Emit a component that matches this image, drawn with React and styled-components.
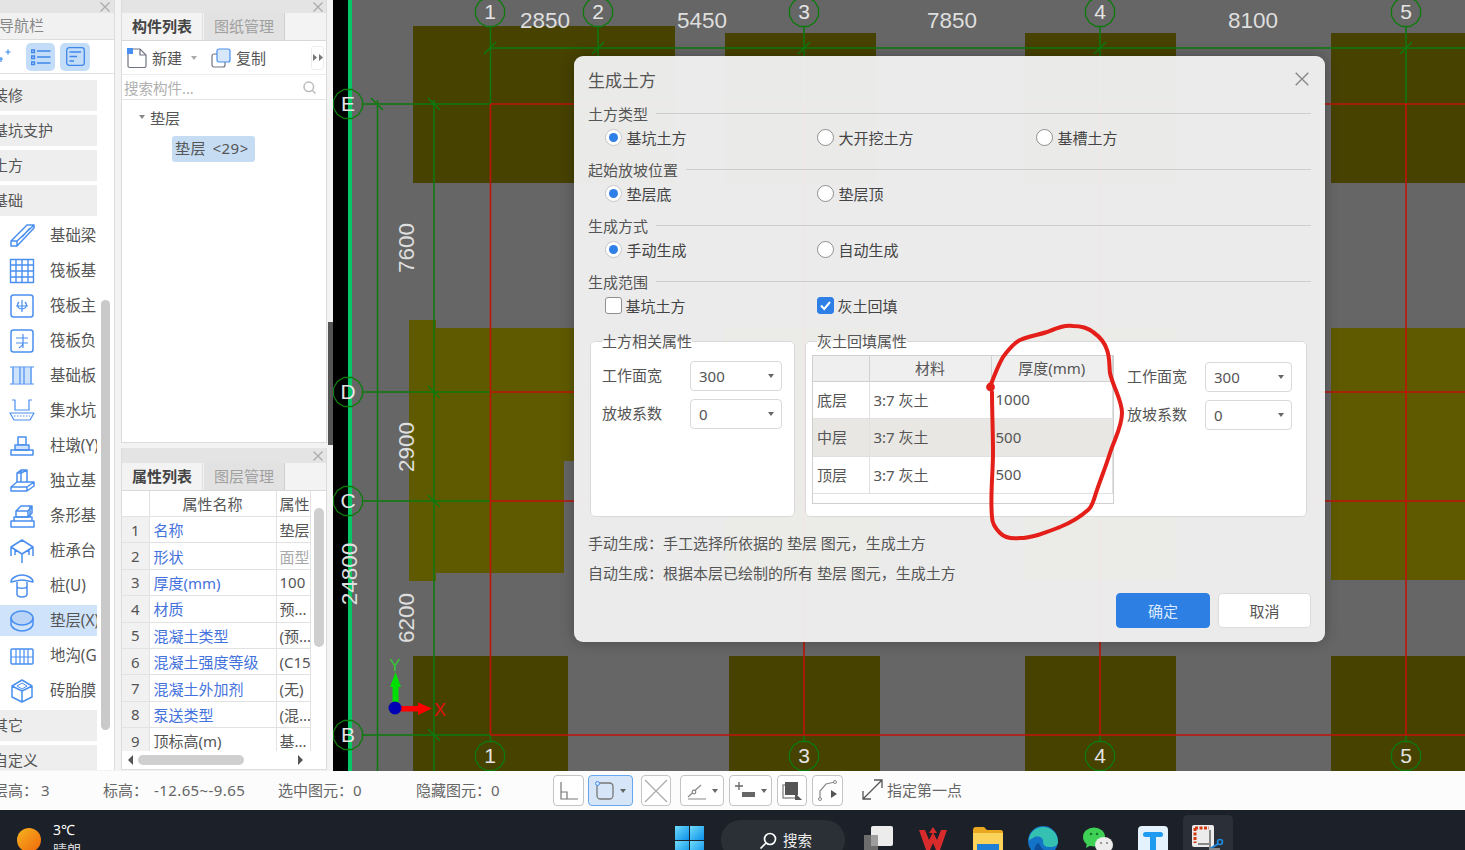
import React from "react";
import styled, { createGlobalStyle } from "styled-components";

const GlobalStyle = createGlobalStyle`
  html, body { margin: 0; padding: 0; overflow: hidden; background: #f3f3f3; }
  body { font-family: "Noto Sans", "Noto Sans CJK SC", sans-serif; color: #555; }
  * { box-sizing: border-box; }
`;

const Page = styled.div`
  width: 1465px;
  height: 850px;
  display: flex;
  flex-direction: column;
  overflow: hidden;
`;

const Main = styled.div`
  height: 771px;
  display: flex;
`;

/* left nav */
const NavPanel = styled.div`
  position: relative;
  width: 115px;
  height: 770px;
  background: #fff;
  border-right: 1px solid #dcdcdc;
  overflow: hidden;
  flex: none;
`;

const TitleStrip = styled.div`
  height: ${(p) => p.$h || 13}px;
  background: #e4e4e4;
  display: flex;
  align-items: center;
  justify-content: flex-end;
  padding-right: ${(p) => p.$pad || 4}px;
  color: #aaa;
`;

const NavHeader = styled.div`
  height: 27px;
  background: #f1f1f1;
  border-bottom: 1px solid #ddd;
  font-size: 15px;
  line-height: 25px;
  color: #888;
  text-indent: -1px;
`;

const NavTools = styled.div`
  height: 34px;
  border-bottom: 1px solid #e2e2e2;
  display: flex;
  align-items: center;
  gap: 5px;
`;

const NavPlusWrap = styled.span`
  display: flex;
  margin-right: 10px;
`;

const NavToolBtn = styled.div`
  width: ${(p) => p.$w}px;
  height: 28px;
  border-radius: 5px;
  background: #c3dcf7;
  display: flex;
  align-items: center;
  justify-content: center;
`;

const NavList = styled.div`
  padding-top: 6px;
  width: 97px;
`;

const NavGroup = styled.div`
  height: 31px;
  margin-bottom: 4px;
  background: #eeeeee;
  font-size: 15px;
  line-height: 30px;
  text-indent: -7px;
  white-space: nowrap;
  overflow: hidden;
`;

const NavItem = styled.div`
  height: 31px;
  margin-bottom: 4px;
  display: flex;
  align-items: center;
  background: ${(p) => (p.$on ? "#cfe4fb" : "transparent")};
  font-size: 15.4px;
  white-space: nowrap;
  overflow: hidden;
  padding-left: 9px;
  svg { flex: none; margin-right: 15px; }
`;

const NavLabel = styled.span`
  margin-top: -2px;
`;

const NavScroll = styled.div`
  position: absolute;
  left: 101px;
  top: 300px;
  width: 9px;
  height: 430px;
  border-radius: 5px;
  background: #c9c9c9;
`;

const Gutter = styled.div`
  width: 6px;
  flex: none;
`;

/* middle column */
const MidColumn = styled.div`
  width: 206px;
  height: 770px;
  flex: none;
  display: flex;
  flex-direction: column;
  gap: 5px;
`;

const Panel = styled.div`
  position: relative;
  background: #fff;
  border: 1px solid #dcdcdc;
  border-top: none;
  height: ${(p) => p.$h}px;
  overflow: hidden;
`;

const Tabs = styled.div`
  height: 28px;
  display: flex;
  background: #f3f3f3;
  border-bottom: 1px solid #d8d8d8;
`;

const Tab = styled.div`
  width: 81px;
  margin-right: 1px;
  font-size: 15px;
  line-height: 26px;
  text-align: center;
  font-weight: ${(p) => (p.$on ? 700 : 400)};
  color: ${(p) => (p.$on ? "#444" : "#a0a0a0")};
  background: ${(p) => (p.$on ? "#f3f3f3" : "#e2e2e2")};
  border-right: ${(p) => (p.$on ? "1px solid #e0e0e0" : "1px solid #cfcfcf")};
`;

const ListTools = styled.div`
  height: 34px;
  display: flex;
  align-items: center;
  padding-left: 5px;
  font-size: 15px;
  border-bottom: 1px solid #ececec;
`;

const ToolLabel = styled.span`
  margin-left: 5px;
  margin-right: ${(p) => p.$mr || 0}px;
`;

const CopyIcon = styled.svg`
  margin-left: 14px;
`;

const MiniCaret = styled.span`
  width: 0;
  height: 0;
  border: 3px solid transparent;
  border-top: 4px solid ${(p) => p.$c || "#999"};
  border-bottom: none;
  flex: none;
`;

const MoreBtn = styled.span`
  margin-left: auto;
  margin-right: 2px;
  width: 13px;
  height: 24px;
  border: 1px solid #eee;
  border-radius: 3px;
  display: flex;
  align-items: center;
  justify-content: center;
`;

const SearchRow = styled.div`
  height: 25px;
  display: flex;
  align-items: center;
  justify-content: space-between;
  padding: 0 10px 0 2px;
  font-size: 14.5px;
  color: #b0b0b0;
  border-bottom: 1px solid #e4e4e4;
`;

const Tree = styled.div`
  padding: 7px 0 0 17px;
  font-size: 15px;
`;

const TreeRoot = styled.div`
  display: flex;
  align-items: center;
  gap: 5px;
  height: 20px;
`;

const TreeChip = styled.div`
  display: inline-block;
  margin: 9px 0 0 33px;
  width: 83px;
  height: 26px;
  line-height: 25px;
  padding-left: 3px;
  border-radius: 3px;
  background: #c5dcf3;
  white-space: nowrap;
  word-spacing: 2px;
  letter-spacing: 0.5px;
`;

const PropTable = styled.table`
  width: 188px;
  table-layout: fixed;
  border-collapse: collapse;
  font-size: 15px;
  th, td {
    height: 26.4px;
    padding: 0;
    border-right: 1px solid #e2e2e2;
    border-bottom: 1px solid #e2e2e2;
    white-space: nowrap;
    overflow: hidden;
    font-weight: 400;
  }
  th { height: 25.5px; }
`;

const PropIndex = styled.td`
  text-align: center;
  background: ${(p) => (p.$blank ? "#fff" : "#f1f1f1")};
`;

const PropName = styled.td`
  padding-left: 4px !important;
  color: ${(p) => (p.$plain ? "#555" : "#4472dc")};
`;

const PropValue = styled.td`
  padding-left: 3px !important;
  color: ${(p) => (p.$muted ? "#a8a8a8" : "#555")};
`;

const PropScroll = styled.div`
  position: absolute;
  left: 192px;
  top: 60px;
  width: 10px;
  height: 139px;
  border-radius: 5px;
  background: #cfcfcf;
`;

const HScroll = styled.div`
  position: absolute;
  left: 0;
  bottom: 0;
  width: 100%;
  height: 18px;
  background: #fff;
  display: flex;
  align-items: center;
  padding-left: 6px;
`;

const HThumb = styled.div`
  width: 106px;
  height: 10px;
  margin: 0 54px 0 5px;
  border-radius: 5px;
  background: #cfcfcf;
`;

const Arrow = styled.span`
  width: 0;
  height: 0;
  border-top: 5px solid transparent;
  border-bottom: 5px solid transparent;
  border-${(p) => (p.$left ? "right" : "left")}: 5px solid #555;
`;

const Splitter = styled.div`
  position: relative;
  width: 6px;
  flex: none;
`;

const SplitGrip = styled.div`
  position: absolute;
  left: 1px;
  top: 322px;
  width: 5px;
  height: 123px;
  background: #555;
`;

/* canvas */
const Canvas = styled.div`
  position: relative;
  flex: 1;
  height: 771px;
  background: #666;
  overflow: hidden;
  svg.cad { display: block; width: 100%; height: 100%; }
`;

const Dialog = styled.div`
  position: absolute;
  left: 241px;
  top: 56px;
  width: 751px;
  height: 586px;
  padding: 0 14px;
  border-radius: 9px;
  background: rgba(240, 240, 240, 0.965);
  box-shadow: 0 0 14px rgba(0, 0, 0, 0.28);
  font-size: 15px;
  color: #555;
`;

const DialogHead = styled.div`
  height: 47px;
  display: flex;
  align-items: center;
  justify-content: space-between;
  font-size: 17px;
  padding: 0 2px 1px 0;
`;

const Section = styled.div`
  height: 56.33px;
`;

const SectionHead = styled.div`
  height: 20px;
  display: flex;
  align-items: center;
  gap: 8px;
  &::after {
    content: "";
    flex: 1;
    height: 1px;
    background: #cdcdcd;
  }
`;

const OptionRow = styled.div`
  height: 28px;
  padding-left: 17px;
  display: grid;
  grid-template-columns: 212px 219px 1fr;
  align-items: center;
`;

const Option = styled.label`
  display: flex;
  align-items: center;
  color: #444;
`;

const Radio = styled.span`
  width: 17px;
  height: 17px;
  margin-right: 4.5px;
  border-radius: 50%;
  background: #fff;
  border: 1px solid ${(p) => (p.$on ? "#c6c6c6" : "#8f8f8f")};
  display: flex;
  align-items: center;
  justify-content: center;
  &::after {
    content: "";
    width: 9px;
    height: 9px;
    border-radius: 50%;
    background: ${(p) => (p.$on ? "#2e7fe6" : "transparent")};
  }
`;

const Check = styled.span`
  width: 17px;
  height: 17px;
  margin-right: 3.5px;
  border-radius: 3px;
  display: flex;
  align-items: center;
  justify-content: center;
  background: ${(p) => (p.$on ? "#2e7fe6" : "#fff")};
  border: 1px solid ${(p) => (p.$on ? "#2e7fe6" : "#8f8f8f")};
`;

const GroupRow = styled.div`
  margin: 2.7px 0 0 2px;
  display: flex;
  gap: 10px;
`;

const Group = styled.fieldset`
  margin: 0;
  height: 186px;
  width: ${(p) => p.$w}px;
  padding: ${(p) => p.$pad};
  border: 1px solid #d9d9d9;
  border-radius: 5px;
  background: #fff;
  min-inline-size: 0;
`;

const GroupLabel = styled.legend`
  margin-left: ${(p) => p.$ml}px;
  padding: 0;
  line-height: 20px;
  font-size: 15px;
  color: #555;
`;

const FieldRow = styled.div`
  display: grid;
  grid-template-columns: ${(p) => p.$label}px ${(p) => p.$select}px;
  align-items: center;
  height: 30px;
  margin-bottom: 8px;
`;

const FieldLabel = styled.span`
  padding-bottom: 3px;
`;

const Select = styled.div`
  height: 30px;
  padding: 0 7px 0 8px;
  border: 1px solid #d9d9d9;
  border-radius: 4px;
  background: #fff;
  display: flex;
  align-items: center;
  justify-content: space-between;
  font-size: 15px;
`;

const TableWrap = styled.div`
  display: flex;
  gap: 13px;
`;

const FrameTable = styled.div`
  width: 302px;
  height: 149px;
  flex: none;
  border: 1px solid #cfcfcf;
  background: #fff;
`;

const Grid = styled.table`
  width: 100%;
  table-layout: fixed;
  border-collapse: collapse;
  th {
    height: 25px;
    background: #efefef;
    font-weight: 400;
    border-right: 1px solid #d0d0d0;
    border-bottom: 1px solid #d0d0d0;
    padding: 0 0 2px;
  }
  td {
    height: 37.6px;
    padding: 0 0 1px 4px;
    border-right: 1px solid #e0e0e0;
    border-bottom: 1px solid #e0e0e0;
  }
  tr:nth-child(2) td { background: #e8e7e3; }
`;

const SideFields = styled.div`
  padding-top: 7px;
`;

const HelpText = styled.div`
  line-height: 30px;
  margin-top: ${(p) => p.$mt || 0}px;
`;

const DialogFoot = styled.div`
  margin-top: 5px;
  display: flex;
  justify-content: flex-end;
  gap: 8px;
`;

const Button = styled.button`
  width: ${(p) => p.$w}px;
  height: 35px;
  padding: 0;
  border-radius: 4px;
  font: inherit;
  color: ${(p) => (p.$primary ? "#dbe9ff" : "#555")};
  background: ${(p) => (p.$primary ? "#2d7fe3" : "#fff")};
  border: 1px solid ${(p) => (p.$primary ? "#2d7fe3" : "#dcdcdc")};
`;

const Scribble = styled.svg`
  position: absolute;
  left: 0;
  top: 0;
  width: 751px;
  height: 586px;
  pointer-events: none;
`;

/* status bar */
const StatusBar = styled.div`
  position: relative;
  height: 39px;
  background: #fcfcfc;
  display: flex;
  align-items: center;
  font-size: 15px;
  color: #666;
  flex: none;
`;

const StatusText = styled.span`
  flex: none;
  width: ${(p) => p.$w}px;
  margin-left: ${(p) => p.$ml || 0}px;
  padding-bottom: 2px;
  white-space: pre;
`;

const StatusValue = styled.span`
  margin-left: ${(p) => p.$ml}px;
  letter-spacing: ${(p) => p.$ls || 0}px;
`;

const StatusTools = styled.div`
  display: flex;
  gap: 5px;
  align-items: center;
`;

const StatusBtn = styled.div`
  width: ${(p) => p.$w}px;
  height: 31px;
  margin-left: ${(p) => p.$ml || 0}px;
  border: 1px solid ${(p) => (p.$on ? "#66a6ee" : "#c4c4c4")};
  border-radius: 4px;
  background: ${(p) => (p.$on ? "#d6e6f8" : "#fff")};
  display: flex;
  align-items: center;
  justify-content: center;
  gap: 5px;
`;

const StatusHint = styled.div`
  margin-left: 19px;
  display: flex;
  align-items: center;
  gap: 4px;
  padding-bottom: 2px;
`;

/* taskbar */
const TaskBar = styled.div`
  position: relative;
  height: 40px;
  background: #1c2129;
  overflow: hidden;
  display: flex;
  flex: none;
`;

const Weather = styled.div`
  width: 675px;
  padding: 10px 0 0 17px;
  display: flex;
  gap: 12px;
  color: #fff;
  font-size: 14px;
  line-height: 20px;
  flex: none;
`;

const Sun = styled.div`
  width: 24px;
  height: 24px;
  margin-top: 8px;
  border-radius: 50%;
  background: linear-gradient(135deg, #f5b41e, #f0670c);
`;

const Muted = styled.div`
  color: #d8d8d8;
  font-size: 14px;
`;

const WinLogo = styled.svg`
  margin-top: 16px;
  flex: none;
`;

const SearchPill = styled.div`
  width: 124px;
  height: 40px;
  margin: 10px 18px 0 17px;
  border-radius: 20px;
  background: #2b3037;
  display: flex;
  align-items: flex-start;
  justify-content: center;
  gap: 6px;
  padding: 9px 0 0 5px;
  color: #eee;
  font-size: 14.5px;
  flex: none;
  svg { margin-top: 3px; flex: none; }
`;

const TaskIcons = styled.div`
  display: flex;
  gap: 25px;
  padding-top: 16px;
`;

const SnipTile = styled.div`
  width: 50px;
  height: 40px;
  margin: 5px 0 0 15px;
  border-radius: 5px 5px 0 0;
  background: #2a2f38;
  display: flex;
  justify-content: center;
  padding-top: 10px;
`;

const BLUE = "#4a8ff0";

const CloseMark = ({ size = 10, color = "#aaa", w = 1.2 }) => (
  <svg width={size} height={size} viewBox="0 0 10 10">
    <path d="M0.5 0.5L9.5 9.5M9.5 0.5L0.5 9.5" stroke={color} strokeWidth={w} fill="none" />
  </svg>
);

const Ico = ({ children }) => (
  <svg width="26" height="26" viewBox="0 0 26 26" fill="none" stroke={BLUE} strokeWidth="1.5" strokeLinejoin="round">
    {children}
  </svg>
);

const navIcons = {
  beam: (
    <Ico>
      <path d="M2 18L18 2H25V5L8 23H2Z M2 18H8V23 M8 18L25 2 M13 14L21 5" />
    </Ico>
  ),
  raft: (
    <Ico>
      <path d="M1.5 1.5H24.5V24.5H1.5Z M7 1.5V24.5 M13 1.5V24.5 M19 1.5V24.5 M1.5 7H24.5 M1.5 13H24.5 M1.5 19H24.5" strokeWidth="1.4" />
    </Ico>
  ),
  rebarA: (
    <Ico>
      <rect x="2" y="2" width="22" height="22" rx="2.5" />
      <path d="M7 13H19 M13 7V19 M10 9C7 12 9 16 13 16 M16 9C19 12 17 16 13 16" strokeWidth="1.2" />
    </Ico>
  ),
  rebarB: (
    <Ico>
      <rect x="2" y="2" width="22" height="22" rx="2.5" />
      <path d="M7 10H19 M7 15H19 M14 6V20 M10 20C13 18 14 17 14 15" strokeWidth="1.2" />
    </Ico>
  ),
  slab: (
    <Ico>
      <rect x="3" y="5" width="20" height="15" fill="#cfe2fb" stroke="none" />
      <path d="M1 4H25 M1 21H25 M4 4V21 M11 4V21 M15 4V21 M22 4V21" strokeWidth="1.2" />
    </Ico>
  ),
  pit: (
    <Ico>
      <path d="M3 2H6V12H20V2H23 M1 15H25L21 22H5Z" strokeWidth="1.2" />
      <path d="M5 18H21" strokeDasharray="1.5 1.5" strokeWidth="1.2" />
    </Ico>
  ),
  pier: (
    <Ico>
      <path d="M9 4H17V12H9Z" />
      <path d="M6 12H20V17H6Z" fill="#cfe2fb" />
      <path d="M2 17H24V22H2Z" />
    </Ico>
  ),
  isolated: (
    <Ico>
      <path d="M8 5L12 2H18V14H8Z M12 2V5H8 M18 2L12 5 M12 5V14" />
      <path d="M8 14L2 19V23H18L25 18V14L18 14 M2 19H18L25 14 M18 19V23" />
    </Ico>
  ),
  strip: (
    <Ico>
      <path d="M7 8L12 3H23V10L19 14H7Z M7 8H19V14 M19 8L23 3" />
      <path d="M5 14H23V18H5Z M2 18H25V24H2Z M21 3V14" />
    </Ico>
  ),
  cap: (
    <Ico>
      <path d="M13 2L24 9L13 16L2 9Z M2 9V18 M24 9V18 M13 16V25 M6 12V17 M20 12V17" />
    </Ico>
  ),
  pile: (
    <Ico>
      <path d="M2 9C2 5 8 2 13 2C18 2 24 5 24 9L17 7.5C15 7 11 7 9 7.5Z" />
      <path d="M8 9V21C8 25 18 25 18 21V9 M8 13C8 16 18 16 18 13" />
    </Ico>
  ),
  pad: (
    <Ico>
      <ellipse cx="13" cy="10" rx="11" ry="7" fill="#b9d4f7" />
      <path d="M2 10V16C2 20 8 23 13 23C18 23 24 20 24 16V10" />
    </Ico>
  ),
  trench: (
    <Ico>
      <rect x="2" y="6" width="22" height="15" rx="1" />
      <path d="M2 14H24 M7 6V21 M11 6V21 M15 6V21 M19 6V21" strokeWidth="1.2" />
    </Ico>
  ),
  brick: (
    <Ico>
      <path d="M13 2L23 8V19L13 24L3 19V8Z M3 8L13 13L23 8 M13 13V24" />
      <path d="M8 8L13 5L18 8L13 11Z" strokeWidth="1" />
    </Ico>
  ),
};

const navTools = [
  ["基础梁", "beam"],
  ["筏板基", "raft"],
  ["筏板主", "rebarA"],
  ["筏板负", "rebarB"],
  ["基础板", "slab"],
  ["集水坑", "pit"],
  ["柱墩(Y)", "pier"],
  ["独立基", "isolated"],
  ["条形基", "strip"],
  ["桩承台", "cap"],
  ["桩(U)", "pile"],
  ["垫层(X)", "pad", true],
  ["地沟(G)", "trench"],
  ["砖胎膜", "brick"],
];

const props = [
  ["名称", "垫层"],
  ["形状", "面型", false, true],
  ["厚度(mm)", "100"],
  ["材质", "预..."],
  ["混凝土类型", "(预..."],
  ["混凝土强度等级", "(C15"],
  ["混凝土外加剂", "(无)"],
  ["泵送类型", "(混..."],
  ["顶标高(m)", "基...", true],
];

const blocks = [
  [413, 26, 262, 157, "#474200"],
  [725, 33, 151, 150, "#474200"],
  [1025, 33, 151, 150, "#474200"],
  [1331, 33, 134, 150, "#474200"],
  [409, 320, 27, 261, "#5f5a00"],
  [436, 328, 128, 245, "#5f5a00"],
  [564, 328, 10, 133, "#5f5a00"],
  [725, 328, 155, 252, "#5f5a00"],
  [1025, 328, 151, 252, "#5f5a00"],
  [1331, 328, 134, 252, "#5f5a00"],
  [413, 656, 155, 115, "#474200"],
  [729, 656, 151, 115, "#474200"],
  [1025, 656, 151, 115, "#474200"],
  [1331, 656, 134, 115, "#474200"],
];

const GREEN = "#0d7a0d";
const RED = "#bf1508";

const dodecagon = (cx, cy, r) =>
  Array.from({ length: 12 }, (_, i) => {
    const a = (Math.PI / 6) * i + Math.PI / 12;
    return `${(cx + r * Math.cos(a)).toFixed(1)},${(cy + r * Math.sin(a)).toFixed(1)}`;
  }).join(" ");

const Axis = ({ x, y, label }) => (
  <g>
    <polygon points={dodecagon(x, y, 15)} fill="none" stroke={GREEN} strokeWidth="1.3" />
    <text x={x} y={y + 7} textAnchor="middle" fontSize="21" fill="#e4e4e4" fontFamily="Liberation Sans, sans-serif">
      {label}
    </text>
  </g>
);

const Dim = ({ x, y, children }) => (
  <text x={x} y={y} textAnchor="middle" fontSize="22.5" fill="#dedede" fontFamily="Liberation Sans, sans-serif">
    {children}
  </text>
);

const VDim = ({ x, y, children }) => (
  <text
    transform={`translate(${x} ${y}) rotate(-90)`}
    textAnchor="middle"
    fontSize="22.5"
    fill="#dedede"
    fontFamily="Liberation Sans, sans-serif"
  >
    {children}
  </text>
);

const Tick = ({ x, y, flip }) => (
  <path d={flip ? `M${x - 6} ${y - 6}L${x + 6} ${y + 6}` : `M${x - 6} ${y + 6}L${x + 6} ${y - 6}`} stroke={GREEN} strokeWidth="1.5" />
);

function CadDrawing() {
  return (
    <svg className="cad" viewBox="333 0 1132 771">
      <rect x="333" y="0" width="15" height="771" fill="#000" />
      <rect x="348" y="0" width="4" height="771" fill="#06c765" />
      {blocks.map((b, i) => (
        <rect key={i} x={b[0]} y={b[1]} width={b[2]} height={b[3]} fill={b[4]} />
      ))}
      <g stroke={GREEN} strokeWidth="1.5">
        <path d="M490.5 27V104 M598 27V104 M804 27V104 M1100 27V104 M1406 27V104" />
        <path d="M490.5 48H1465" />
        <path d="M363 104H490 M363 392H490 M363 501H490 M363 735H490" />
        <path d="M377.5 100V771 M434 100V771" />
        <path d="M490.5 735V741 M804 735V741 M1100 735V741 M1406 735V741" />
      </g>
      <g stroke={RED} strokeWidth="1.6">
        <path d="M490.5 104H1465 M490.5 392H1465 M490.5 501H1465 M490.5 735H1465" />
        <path d="M490.5 104V735 M804 104V735 M1100 104V735 M1406 104V735" />
      </g>
      <Tick x={490} y={48} />
      <Tick x={598} y={48} />
      <Tick x={804} y={48} />
      <Tick x={1100} y={48} />
      <Tick x={1406} y={48} />
      <Tick x={377} y={104} flip />
      <Tick x={434} y={104} flip />
      <Tick x={434} y={392} flip />
      <Tick x={434} y={501} flip />
      <Tick x={434} y={735} flip />
      {[[490, "1"], [598, "2"], [804, "3"], [1100, "4"], [1406, "5"]].map(([x, l]) => (
        <Axis key={l} x={x} y={12} label={l} />
      ))}
      {[[490, "1"], [804, "3"], [1100, "4"], [1406, "5"]].map(([x, l]) => (
        <Axis key={l} x={x} y={756} label={l} />
      ))}
      {[[104, "E"], [392, "D"], [501, "C"], [735, "B"]].map(([y, l]) => (
        <Axis key={l} x={348} y={y} label={l} />
      ))}
      <Dim x={545} y={28}>2850</Dim>
      <Dim x={702} y={28}>5450</Dim>
      <Dim x={952} y={28}>7850</Dim>
      <Dim x={1253} y={28}>8100</Dim>
      <VDim x={414} y={248}>7600</VDim>
      <VDim x={414} y={447}>2900</VDim>
      <VDim x={414} y={618}>6200</VDim>
      <VDim x={357} y={574}>24800</VDim>
      {/* ucs */}
      <path d="M392.5 708V687H390L395.5 672L401 687H398.5V708Z" fill="#00e000" />
      <path d="M395 706H418V702.5L432 708.5L418 715V711.5H395Z" fill="#ff0000" />
      <circle cx="395" cy="708" r="6.5" fill="#0000b4" />
      <text x="395" y="671" textAnchor="middle" fontSize="17" fill="#35c435" fontFamily="Liberation Sans, sans-serif">Y</text>
      <text x="440" y="716" textAnchor="middle" fontSize="18" fill="#e01010" fontFamily="Liberation Sans, sans-serif">X</text>
    </svg>
  );
}

const Caret = () => <MiniCaret $c="#666" />;

function EarthDialog() {
  return (
    <Dialog>
      <DialogHead>
        <span>生成土方</span>
        <CloseMark size={14} color="#888" w={1} />
      </DialogHead>
      <Section>
        <SectionHead>土方类型</SectionHead>
        <OptionRow>
          <Option><Radio $on />基坑土方</Option>
          <Option><Radio />大开挖土方</Option>
          <Option><Radio />基槽土方</Option>
        </OptionRow>
      </Section>
      <Section>
        <SectionHead>起始放坡位置</SectionHead>
        <OptionRow>
          <Option><Radio $on />垫层底</Option>
          <Option><Radio />垫层顶</Option>
        </OptionRow>
      </Section>
      <Section>
        <SectionHead>生成方式</SectionHead>
        <OptionRow>
          <Option><Radio $on />手动生成</Option>
          <Option><Radio />自动生成</Option>
        </OptionRow>
      </Section>
      <Section>
        <SectionHead>生成范围</SectionHead>
        <OptionRow>
          <Option><Check />基坑土方</Option>
          <Option>
            <Check $on>
              <svg width="13" height="13" viewBox="0 0 13 13">
                <path d="M2 6.5L5.2 10L11 3" stroke="#fff" strokeWidth="2" fill="none" />
              </svg>
            </Check>
            灰土回填
          </Option>
        </OptionRow>
      </Section>
      <GroupRow>
        <Group $w={205} $pad="10px 0 0 11px">
          <GroupLabel $ml={0}>土方相关属性</GroupLabel>
          <FieldRow $label={88} $select={92}>
            <FieldLabel>工作面宽</FieldLabel>
            <Select>300<Caret /></Select>
          </FieldRow>
          <FieldRow $label={88} $select={92}>
            <FieldLabel>放坡系数</FieldLabel>
            <Select>0<Caret /></Select>
          </FieldRow>
        </Group>
        <Group $w={502} $pad="4px 0 0 6px">
          <GroupLabel $ml={5}>灰土回填属性</GroupLabel>
          <TableWrap>
            <FrameTable>
              <Grid>
                <colgroup>
                  <col width="56" />
                  <col width="122" />
                  <col />
                </colgroup>
                <thead>
                  <tr><th></th><th>材料</th><th>厚度(mm)</th></tr>
                </thead>
                <tbody>
                  <tr><td>底层</td><td>3:7 灰土</td><td>1000</td></tr>
                  <tr><td>中层</td><td>3:7 灰土</td><td>500</td></tr>
                  <tr><td>顶层</td><td>3:7 灰土</td><td>500</td></tr>
                </tbody>
              </Grid>
            </FrameTable>
            <SideFields>
              <FieldRow $label={78} $select={87}>
                <FieldLabel>工作面宽</FieldLabel>
                <Select>300<Caret /></Select>
              </FieldRow>
              <FieldRow $label={78} $select={87}>
                <FieldLabel>放坡系数</FieldLabel>
                <Select>0<Caret /></Select>
              </FieldRow>
            </SideFields>
          </TableWrap>
        </Group>
      </GroupRow>
      <HelpText $mt={11}>手动生成：手工选择所依据的 垫层 图元，生成土方</HelpText>
      <HelpText>自动生成：根据本层已绘制的所有 垫层 图元，生成土方</HelpText>
      <DialogFoot>
        <Button $primary $w={94}>确定</Button>
        <Button $w={93}>取消</Button>
      </DialogFoot>
      {/* hand drawn red ring, page coords minus dialog origin */}
      <Scribble viewBox="574 56 751 586">
        <path
          d="M990 387C994 376 999 364 1003 357C1009 349 1014 343 1020 340C1030 336 1038 335 1047 332C1057 328 1064 325 1073 326C1081 326 1088 328 1093 332C1100 337 1105 343 1107 350C1110 358 1109 365 1110 373C1113 387 1122 400 1122 413C1122 427 1114 440 1110 453C1106 466 1101 478 1097 490C1094 498 1093 506 1088 510C1080 517 1070 523 1060 527C1047 532 1033 538 1020 538C1012 539 1005 538 1000 533C995 528 992 523 992 517C990 497 993 473 993 453C993 430 992 412 992 392"
          fill="none"
          stroke="#e41f1a"
          strokeWidth="4"
          strokeLinecap="round"
        />
        <circle cx="990.5" cy="387" r="4.4" fill="#e41f1a" />
      </Scribble>
    </Dialog>
  );
}

const NavPlus = () => (
  <svg width="11" height="16" viewBox="0 0 11 16" fill="none" stroke="#3f8cf0" strokeWidth="1.2">
    <path d="M5.5 3H10.5 M8 0.5V5.5 M-1 10H3 M1 8V13" />
  </svg>
);

const NavListIco = () => (
  <svg width="20" height="18" viewBox="0 0 20 18" fill="none" stroke="#3f86ea" strokeWidth="1.3">
    <path d="M0.5 2H3.5V4.5H0.5Z M0.5 8H3.5V10.5H0.5Z M0.5 14H3.5V16.5H0.5Z M6 3H19.5 M6 9H19.5 M6 15H19.5" />
  </svg>
);

const NavDetailIco = () => (
  <svg width="19" height="19" viewBox="0 0 19 19" fill="none" stroke="#3f86ea" strokeWidth="1.3">
    <rect x="0.7" y="0.7" width="17.6" height="17.6" rx="2.5" />
    <path d="M3.5 5H15 M3.5 9.5H11 M3.5 14H8" />
  </svg>
);

function App() {
  return (
    <Page>
      <GlobalStyle />
      <Main>
        <NavPanel>
          <TitleStrip $pad={4}><CloseMark /></TitleStrip>
          <NavHeader>导航栏</NavHeader>
          <NavTools>
            <NavPlusWrap><NavPlus /></NavPlusWrap>
            <NavToolBtn $w={29}><NavListIco /></NavToolBtn>
            <NavToolBtn $w={30}><NavDetailIco /></NavToolBtn>
          </NavTools>
          <NavList>
            <NavGroup>装修</NavGroup>
            <NavGroup>基坑支护</NavGroup>
            <NavGroup>土方</NavGroup>
            <NavGroup>基础</NavGroup>
            {navTools.map(([label, icon, on]) => (
              <NavItem key={label} $on={on}>
                {navIcons[icon]}
                <NavLabel>{label}</NavLabel>
              </NavItem>
            ))}
            <NavGroup>其它</NavGroup>
            <NavGroup>自定义</NavGroup>
          </NavList>
          <NavScroll />
        </NavPanel>
        <Gutter />
        <MidColumn>
          <Panel $h={443}>
            <TitleStrip $pad={3}><CloseMark /></TitleStrip>
            <Tabs>
              <Tab $on>构件列表</Tab>
              <Tab>图纸管理</Tab>
            </Tabs>
            <ListTools>
              <svg width="20" height="20" viewBox="0 0 20 20" fill="none">
                <path d="M2 1H13L19 7V18C19 19 18 19.500 17 19.500H3C2 19.500 1 19 1 18V2" stroke="#6f7480" strokeWidth="1.2" />
                <path d="M13 1V7H19" stroke="#6f7480" strokeWidth="1.2" />
                <rect x="0" y="0" width="6" height="6" fill="#4a8ff0" />
              </svg>
              <ToolLabel $mr={9}>新建</ToolLabel>
              <MiniCaret $c="#aaa" />
              <CopyIcon width="20" height="20" viewBox="0 0 20 20" fill="none">
                <rect x="1" y="6" width="13" height="13" rx="2" stroke="#6f7480" strokeWidth="1.2" />
                <rect x="6" y="1" width="13" height="13" rx="2" fill="#d8e8fb" stroke="#4a8ff0" strokeWidth="1.2" />
              </CopyIcon>
              <ToolLabel>复制</ToolLabel>
              <MoreBtn>
                <svg width="10" height="7" viewBox="0 0 10 7" fill="#777">
                  <path d="M0 0L4 3.500L0 7Z M6 0L10 3.500L6 7Z" />
                </svg>
              </MoreBtn>
            </ListTools>
            <SearchRow>
              搜索构件...
              <svg width="13" height="13" viewBox="0 0 13 13" fill="none" stroke="#bbb" strokeWidth="1.5">
                <circle cx="5.800" cy="5.800" r="4.800" />
                <path d="M9.500 9.500L12.500 12.500" />
              </svg>
            </SearchRow>
            <Tree>
              <TreeRoot>
                <MiniCaret $c="#888" />
                垫层
              </TreeRoot>
              <TreeChip>垫层 &lt;29&gt;</TreeChip>
            </Tree>
          </Panel>
          <Panel $h={322}>
            <TitleStrip $pad={3} $h={15}><CloseMark /></TitleStrip>
            <Tabs>
              <Tab $on>属性列表</Tab>
              <Tab>图层管理</Tab>
            </Tabs>
            <PropTable>
              <colgroup>
                <col width="27" />
                <col width="127" />
                <col width="34" />
              </colgroup>
              <thead>
                <tr>
                  <PropIndex as="th" $blank></PropIndex>
                  <th>属性名称</th>
                  <PropValue as="th">属性值</PropValue>
                </tr>
              </thead>
              <tbody>
                {props.map(([name, value, plain, muted], i) => (
                  <tr key={name}>
                    <PropIndex>{i + 1}</PropIndex>
                    <PropName $plain={plain}>{name}</PropName>
                    <PropValue $muted={muted}>{value}</PropValue>
                  </tr>
                ))}
              </tbody>
            </PropTable>
            <PropScroll />
            <HScroll>
              <Arrow $left />
              <HThumb />
              <Arrow />
            </HScroll>
          </Panel>
        </MidColumn>
        <Splitter><SplitGrip /></Splitter>
        <Canvas>
          <CadDrawing />
          <EarthDialog />
        </Canvas>
      </Main>
      <StatusBar>
        <StatusText $w={103} $ml={-7}>层高：<StatusValue $ml={3}>3</StatusValue></StatusText>
        <StatusText $w={175} $ml={7}>标高：<StatusValue $ml={6} $ls={0.4}>-12.65~-9.65</StatusValue></StatusText>
        <StatusText $w={138}>选中图元：0</StatusText>
        <StatusText $w={137}>隐藏图元：0</StatusText>
        <StatusTools>
          <StatusBtn $w={31}>
            <svg width="20" height="20" viewBox="0 0 20 20" fill="none" stroke="#777" strokeWidth="1.2">
              <path d="M2 1V18H19 M2 11H8V18" />
            </svg>
          </StatusBtn>
          <StatusBtn $w={45} $on $ml={-1}>
            <svg width="20" height="20" viewBox="0 0 20 20" fill="none">
              <rect x="2" y="2" width="16" height="16" rx="3.500" stroke="#777" strokeWidth="1.3" />
              <circle cx="2.500" cy="2.500" r="2" fill="#d6e6f8" stroke="#4a8ff0" />
            </svg>
            <MiniCaret $c="#666" />
          </StatusBtn>
          <StatusBtn $w={30} $ml={3}>
            <svg width="24" height="24" viewBox="0 0 24 24" fill="none" stroke="#aaa" strokeWidth="1.2">
              <path d="M1 1L23 23 M23 1L1 23" />
            </svg>
          </StatusBtn>
          <StatusBtn $w={44} $ml={4}>
            <svg width="20" height="20" viewBox="0 0 20 20" fill="none" stroke="#888" strokeWidth="1.2">
              <path d="M1 16L14 4 M1 18H19" />
              <circle cx="7" cy="11" r="1.800" fill="#fff" />
            </svg>
            <MiniCaret $c="#666" />
          </StatusBtn>
          <StatusBtn $w={43}>
            <svg width="22" height="20" viewBox="0 0 22 20" fill="none">
              <path d="M1 5H9 M5 1V9" stroke="#666" strokeWidth="1.300" />
              <rect x="8" y="11" width="13" height="5" fill="#666" />
            </svg>
            <MiniCaret $c="#666" />
          </StatusBtn>
          <StatusBtn $w={30}>
            <svg width="22" height="22" viewBox="0 0 22 22" fill="none">
              <rect x="2" y="5" width="13" height="13" stroke="#777" strokeWidth="1.200" />
              <rect x="4" y="2" width="13" height="13" fill="#555" />
              <path d="M14 13L21 20H14Z" fill="#555" />
            </svg>
          </StatusBtn>
          <StatusBtn $w={31}>
            <svg width="22" height="22" viewBox="0 0 22 22" fill="none">
              <path d="M3 19V11L9 4L18 2" stroke="#888" strokeWidth="1.200" />
              <circle cx="3" cy="19" r="1.500" fill="#fff" stroke="#888" />
              <circle cx="18" cy="2" r="1.500" fill="#fff" stroke="#888" />
              <path d="M14 10L20 14L14 18Z" fill="#555" />
            </svg>
          </StatusBtn>
        </StatusTools>
        <StatusHint>
          <svg width="21" height="21" viewBox="0 0 21 21" fill="none" stroke="#555" strokeWidth="1.300">
            <path d="M1 20L20 1 M12 1H20V9 M1 12V20H9" />
          </svg>
          指定第一点
        </StatusHint>
      </StatusBar>
      <TaskBar>
        <Weather>
          <Sun />
          <div>
            3℃
            <Muted>晴朗</Muted>
          </div>
        </Weather>
        <WinLogo width="29" height="29" viewBox="0 0 29 29">
          <defs>
            <linearGradient id="win" x1="0" y1="0" x2="1" y2="1">
              <stop offset="0" stopColor="#6fdcfb" />
              <stop offset="1" stopColor="#0a8fe8" />
            </linearGradient>
          </defs>
          <rect x="0" y="0" width="14" height="14" fill="url(#win)" />
          <rect x="15" y="0" width="14" height="14" fill="url(#win)" />
          <rect x="0" y="15" width="14" height="14" fill="url(#win)" />
          <rect x="15" y="15" width="14" height="14" fill="url(#win)" />
        </WinLogo>
        <SearchPill>
          <svg width="18" height="18" viewBox="0 0 18 18" fill="none" stroke="#fff" strokeWidth="1.700">
            <circle cx="11" cy="7" r="5.500" />
            <path d="M7 11L1.500 16.500" />
          </svg>
          搜索
        </SearchPill>
        <TaskIcons>
          <svg width="30" height="30" viewBox="0 0 30 30">
            <rect x="1" y="9" width="14" height="16" fill="#6d6d6d" />
            <rect x="8" y="0" width="22" height="20" rx="2" fill="#ececec" />
            <rect x="8" y="9" width="7" height="11" fill="#9d9d9d" />
          </svg>
          <svg width="30" height="30" viewBox="0 0 30 30" fill="none">
            <path d="M1 4H7L11 14L15 6L19 14L23 4H29L22 24H18L15 17L12 24H8Z M11 7L15 1L19 7" fill="#d92b2b" />
          </svg>
          <svg width="30" height="30" viewBox="0 0 30 30">
            <path d="M0 4C0 2 1 1 3 1H11L14 4H28C29 4 30 5 30 6V30H0Z" fill="#e9a61f" />
            <rect x="0" y="7" width="30" height="23" fill="#fbd35a" />
            <rect x="4" y="18" width="22" height="12" fill="#1f7fd6" />
          </svg>
          <svg width="30" height="30" viewBox="0 0 30 30">
            <circle cx="15" cy="15" r="15" fill="#1273c7" />
            <path d="M1 15C1 6 8 1 15 1C24 1 30 8 30 16C30 20 26 21 22 21C17 21 15 19 15 15C15 11 9 9 5 12C3 13 1 14 1 15Z" fill="#35c1b1" />
            <path d="M9 30C5 26 6 18 11 17C13 23 18 27 26 25C22 29 15 31 9 30Z" fill="#0c4f9e" />
          </svg>
          <svg width="30" height="30" viewBox="0 0 30 30">
            <ellipse cx="11" cy="11" rx="11" ry="9.500" fill="#3ed155" />
            <path d="M4 16L3 22L10 18Z" fill="#3ed155" />
            <ellipse cx="21" cy="19" rx="9" ry="8" fill="#ececec" />
            <circle cx="8" cy="8" r="1.300" fill="#177a2b" />
            <circle cx="14" cy="8" r="1.300" fill="#177a2b" />
            <circle cx="18" cy="17" r="1.100" fill="#888" />
            <circle cx="24" cy="17" r="1.100" fill="#888" />
          </svg>
          <svg width="30" height="30" viewBox="0 0 30 30">
            <rect x="0" y="0" width="30" height="30" rx="4" fill="#e3f2fd" />
            <rect x="5" y="6" width="20" height="5" rx="2.500" fill="#1e9bf0" />
            <rect x="12" y="6" width="6" height="22" rx="3" fill="#1e9bf0" />
          </svg>
        </TaskIcons>
        <SnipTile>
          <svg width="32" height="32" viewBox="0 0 32 32">
            <rect x="0" y="0" width="22" height="22" rx="2" fill="#ececec" />
            <path d="M3 3H17M3 3V18" stroke="#d13a10" strokeWidth="3" strokeDasharray="3 1.500" fill="none" />
            <path d="M18 5V24H28 M6 19H17" stroke="#888" strokeWidth="2" fill="none" />
            <circle cx="28" cy="17" r="2.500" fill="none" stroke="#1c8be0" strokeWidth="1.600" />
            <path d="M19 23L26 19 M22 26V32" stroke="#1c8be0" strokeWidth="2" />
          </svg>
        </SnipTile>
      </TaskBar>
    </Page>
  );
}

export default App;
